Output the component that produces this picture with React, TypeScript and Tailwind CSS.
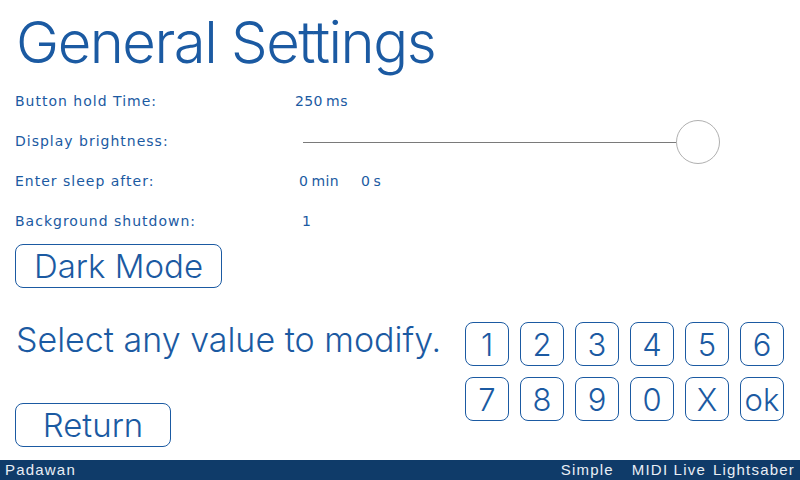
import React from 'react';

const BLUE = 'text-[#1b5aa2]';

// One settings line: label on the left, value area from x≈295
const Row = ({ label, children }: { label: string; children?: React.ReactNode }) => (
  <div className="flex items-center h-[40px]">
    <div className="w-[280px] text-[14px] tracking-[1px]">{label}</div>
    <div className="flex-1 flex items-center text-[14px] tracking-[0.4px]">{children}</div>
  </div>
);

const keys = ['1', '2', '3', '4', '5', '6', '7', '8', '9', '0', 'X', 'ok'];

export default function App() {
  return (
    <div
      className={`w-[800px] h-[480px] bg-white flex flex-col overflow-hidden ${BLUE}`}
      style={{ fontFamily: 'Inter, "DejaVu Sans", sans-serif' }}
    >
      <div className="pl-[15px] pr-[16px]">
        <h1 className="text-[58px] leading-none font-light pt-[13px] pl-[1px] tracking-[-1.5px]">
          General Settings
        </h1>

        <div className="mt-[10px]" style={{ fontFamily: '"DejaVu Sans", sans-serif' }}>
          <Row label="Button hold Time:">250&thinsp;ms</Row>
          <Row label="Display brightness:">
            <div className="flex items-center ml-[8px] mt-[2px]">
              <div className="w-[373px] h-[1px] bg-[#7a7a7a]" />
              <div className="w-[44px] h-[44px] rounded-full border border-[#b0b0b0] bg-white" />
            </div>
          </Row>
          <Row label="Enter sleep after:">
            <span className="ml-[4px]">0&thinsp;min</span>
            <span className="ml-[22px]">0&thinsp;s</span>
          </Row>
          <Row label="Background shutdown:">
            <span className="ml-[7px]">1</span>
          </Row>
        </div>

        <button className="mt-[3px] w-[207px] h-[44px] rounded-[8px] border border-[#1b5aa2] text-[33px] font-light leading-none">
          Dark Mode
        </button>

        <div className="flex justify-between mt-[34px]">
          <div className="flex flex-col">
            <div className="text-[34px] font-light leading-none pl-[1px] mt-[1px]">
              Select any value to modify.
            </div>
            <button className="mt-[46px] w-[156px] h-[44px] rounded-[8px] border border-[#1b5aa2] text-[33px] font-light leading-none">
              Return
            </button>
          </div>
          <div className="grid grid-cols-6 gap-[11px] h-fit">
            {keys.map((k) => (
              <button
                key={k}
                className="w-[44px] h-[44px] rounded-[8px] border border-[#1b5aa2] text-[31px] font-light leading-none flex items-center justify-center"
              >
                {k}
              </button>
            ))}
          </div>
        </div>
      </div>

      <div
        className="mt-auto h-[20px] bg-[#0f3b69] text-[#e8eef5] text-[15px] tracking-[1.2px] flex items-center px-[5px]"
        style={{ fontFamily: '"Liberation Sans", sans-serif' }}
      >
        <span>Padawan</span>
        <span className="ml-auto">Simple</span>
        <span className="ml-[18px]">MIDI Live</span>
        <span className="ml-[7px]">Lightsaber</span>
      </div>
    </div>
  );
}
